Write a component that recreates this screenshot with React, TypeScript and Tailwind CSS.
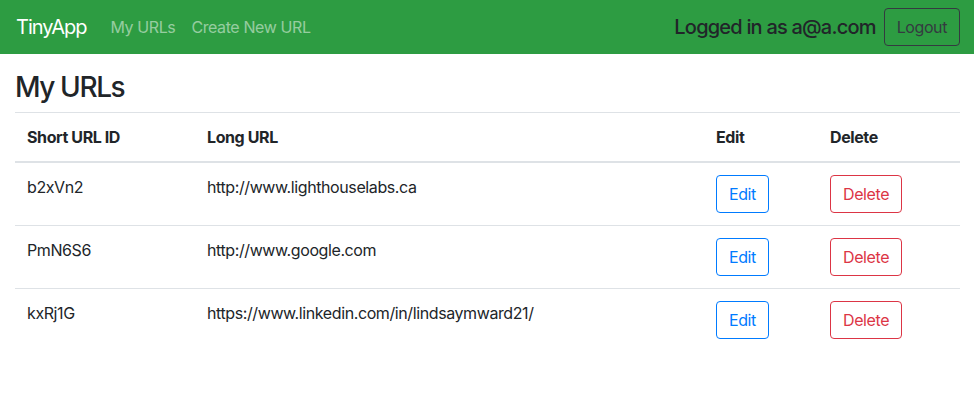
import React from 'react';

type Url = { id: string; longURL: string };

const urls: Url[] = [
  { id: 'b2xVn2', longURL: 'http://www.lighthouselabs.ca' },
  { id: 'PmN6S6', longURL: 'http://www.google.com' },
  { id: 'kxRj1G', longURL: 'https://www.linkedin.com/in/lindsaymward21/' },
];

const cell = 'p-3 align-top';

export default function App() {
  return (
    <div className="min-h-[418px] bg-white text-[#212529] font-['Inter',sans-serif] text-base tracking-[-0.025em]">
      {/* Navbar */}
      <nav className="h-[54px] bg-[#2d9c42] flex items-center justify-between pl-4 pr-[14px]">
        <div className="flex items-center">
          <a className="text-[20px] leading-[30px] text-white mr-4 tracking-[-0.05em]">TinyApp</a>
          <a className="px-2 py-2 text-white/50">My URLs</a>
          <a className="px-2 py-2 text-white/50">Create New URL</a>
        </div>
        <div className="flex items-center">
          <span className="text-[20px] font-medium leading-[24px] tracking-[-0.04em]">Logged in as a@a.com</span>
          <button className="ml-2 h-[38px] px-3 rounded border border-[#343a40] text-[#343a40] text-base">
            Logout
          </button>
        </div>
      </nav>

      {/* Main */}
      <main className="pl-[15px] pr-[14px]">
        <h3 className="text-[28px] font-medium leading-[34px] mt-[16px] mb-[8px] tracking-[-0.05em]">My URLs</h3>
        <table className="w-full border-collapse">
          <thead>
            <tr>
              <th className="w-[180px] text-left font-bold p-3 border-t border-[#dee2e6] border-b-2">Short URL ID</th>
              <th className="text-left font-bold p-3 border-t border-[#dee2e6] border-b-2">Long URL</th>
              <th className="w-[114px] text-left font-bold p-3 border-t border-[#dee2e6] border-b-2">Edit</th>
              <th className="w-[142px] text-left font-bold p-3 border-t border-[#dee2e6] border-b-2">Delete</th>
            </tr>
          </thead>
          <tbody>
            {urls.map((url, i) => (
              <tr key={url.id} className={i > 0 ? 'border-t border-[#dee2e6]' : ''}>
                <td className={cell}>{url.id}</td>
                <td className={cell}>{url.longURL}</td>
                <td className={cell}>
                  <button className="h-[38px] px-3 rounded border border-[#007bff] text-[#007bff]">Edit</button>
                </td>
                <td className={cell}>
                  <button className="h-[38px] px-3 rounded border border-[#dc3545] text-[#dc3545]">Delete</button>
                </td>
              </tr>
            ))}
          </tbody>
        </table>
      </main>
    </div>
  );
}
